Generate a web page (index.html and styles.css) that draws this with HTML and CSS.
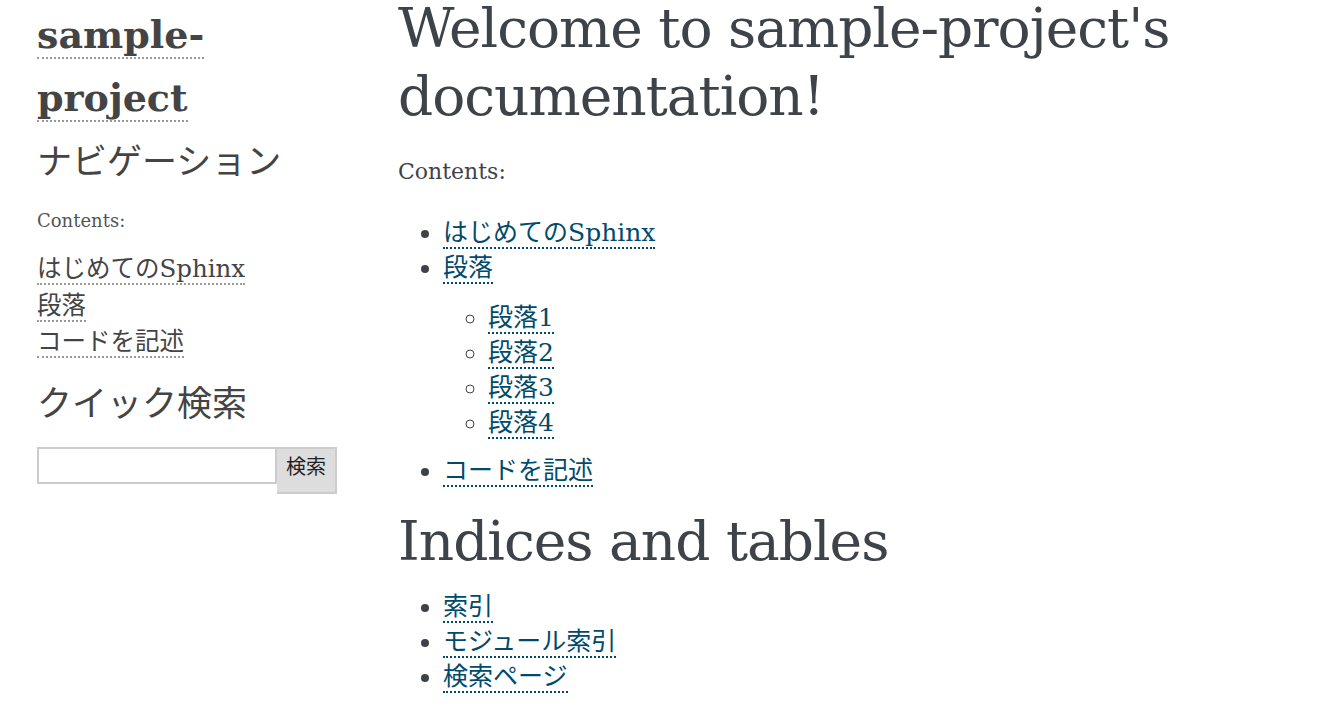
FILE: index.html
```html
<!DOCTYPE html>
<html lang="ja">
<head>
<meta charset="utf-8">
<title>Welcome to sample-project's documentation!</title>
<link rel="stylesheet" href="styles.css">
</head>
<body>
<div class="page">
  <aside class="sidebar">
    <h1 class="logo"><a href="#">sample-project</a></h1>
    <h3 class="side-title">ナビゲーション</h3>
    <p class="side-caption">Contents:</p>
    <ul class="side-toc">
      <li><a href="#">はじめてのSphinx</a></li>
      <li><a href="#">段落</a></li>
      <li><a href="#">コードを記述</a></li>
    </ul>
    <h3 class="side-title search-title">クイック検索</h3>
    <form class="search" onsubmit="return false">
      <input class="search-input" type="text" name="q" aria-label="search">
      <button class="search-btn" type="submit">検索</button>
    </form>
  </aside>
  <main class="body">
    <h1 class="title">Welcome to sample-project's documentation!</h1>
    <p class="caption">Contents:</p>
    <ul class="toc">
      <li><a href="#">はじめてのSphinx</a></li>
      <li><a href="#">段落</a>
        <ul class="toc-sub">
          <li><a href="#">段落1</a></li>
          <li><a href="#">段落2</a></li>
          <li><a href="#">段落3</a></li>
          <li><a href="#">段落4</a></li>
        </ul>
      </li>
      <li><a href="#">コードを記述</a></li>
    </ul>
    <h1 class="title second">Indices and tables</h1>
    <ul class="toc last">
      <li><a href="#">索引</a></li>
      <li><a href="#">モジュール索引</a></li>
      <li><a href="#">検索ページ</a></li>
    </ul>
  </main>
</div>
</body>
</html>
```
FILE: styles.css
```css
html, body {
  margin: 0;
  padding: 0;
  background: #fff;
}

body {
  font-family: "DejaVu Serif", "Noto Sans CJK JP", serif;
  color: #3E4349;
}

a {
  text-decoration: none;
}

.page {
  display: flex;
  align-items: flex-start;
}

/* ---------- sidebar ---------- */
.sidebar {
  flex: 0 0 398px;
  box-sizing: border-box;
  padding-left: 37px;
}

.sidebar > * {
  width: 300px;
}

.logo {
  margin: 3px 0 0 0;
  font-size: 38px;
  font-weight: bold;
  line-height: 63px;
  color: #444;
}

.logo a {
  color: #444;
  border-bottom: 2px dotted #999;
}

.side-title {
  margin: 11px 0 0 0;
  font-size: 35px;
  font-weight: normal;
  line-height: 44px;
  color: #444;
}

.side-caption {
  margin: 23px 0 0 0;
  font-size: 18px;
  line-height: 27px;
  color: #555;
}

.side-toc {
  list-style: none;
  margin: 17px 0 0 0;
  padding: 0;
}

.side-toc li {
  font-size: 24.5px;
  line-height: 36.5px;
}

.side-toc a {
  color: #444;
  border-bottom: 2px dotted #999;
}

.search-title {
  margin-top: 21px;
}

.search {
  display: flex;
  align-items: flex-start;
  margin: 21px 0 0 0;
}

.search-input {
  box-sizing: border-box;
  width: 240px;
  height: 37px;
  margin: 0;
  border: 2px solid #ccc;
  padding: 2px 6px;
  font-family: "DejaVu Serif", "Noto Sans CJK JP", serif;
  font-size: 18px;
  background: #fff;
  outline: none;
}

.search-btn {
  box-sizing: border-box;
  width: 60px;
  height: 47px;
  margin: 0;
  border: 2px solid #ccc;
  border-left: 0;
  background: #ddd;
  color: #222;
  font-family: "Noto Sans CJK JP", sans-serif;
  font-size: 20px;
  padding: 0 0 8px 0;
  line-height: 1;
}

/* ---------- main body ---------- */
.body {
  flex: 1;
  min-width: 0;
  padding-right: 30px;
}

.title {
  margin: -6px 0 0 0;
  font-size: 55px;
  letter-spacing: -1px;
  font-weight: normal;
  line-height: 68px;
  color: #3E4349;
}

.title.second {
  margin-top: 19.5px;
}

.caption {
  margin: 24px 0 0 0;
  font-size: 22px;
  line-height: 35px;
}

.toc {
  margin: 25.5px 0 0 0;
  padding-left: 45px;
  font-size: 25px;
  line-height: 35px;
}

.toc.last {
  margin-top: 13.5px;
}

.toc-sub {
  list-style-type: circle;
  margin: 15px 0 13px 0;
  padding-left: 45px;
}

.toc a {
  color: #004B6B;
  border-bottom: 2px dotted #004B6B;
}
```
